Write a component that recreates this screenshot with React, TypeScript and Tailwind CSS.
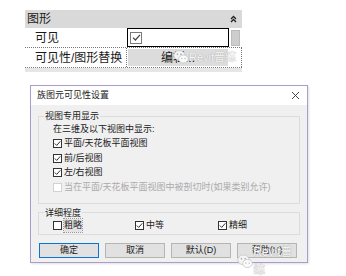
import React from 'react';

const FONT = "font-['Liberation_Sans','Noto_Sans_CJK_SC',sans-serif]";

function CheckBox({ checked, disabled }: { checked?: boolean; disabled?: boolean }) {
  return (
    <span
      className={`w-[9px] h-[9px] border bg-white flex items-center justify-center shrink-0 ${
        disabled ? 'border-[#d2d2d2]' : 'border-[#333]'
      }`}
    >
      {checked && (
        <svg width="7" height="7" viewBox="0 0 7 7">
          <path d="M0.8 3.5 L2.7 5.4 L6.3 1.3" fill="none" stroke="#333" strokeWidth="1" />
        </svg>
      )}
    </span>
  );
}

function Option({ label, checked, disabled }: { label: string; checked?: boolean; disabled?: boolean }) {
  return (
    <div className={`flex items-center gap-[2px] h-[14.5px] ${disabled ? 'text-[#ababab]' : 'text-[#222]'}`}>
      <CheckBox checked={checked} disabled={disabled} />
      <span>{label}</span>
    </div>
  );
}

function WeChat({ size }: { size: number }) {
  return (
    <svg width={size} height={size} viewBox="0 0 20 20">
      <ellipse cx="8" cy="8" rx="7" ry="6" fill="#f4f4f4" stroke="#bdbdbd" strokeWidth="0.8" />
      <ellipse cx="13" cy="12.5" rx="6" ry="5" fill="#fafafa" stroke="#bdbdbd" strokeWidth="0.8" />
      <circle cx="5.5" cy="6.5" r="0.9" fill="#9a9a9a" />
      <circle cx="10" cy="6.5" r="0.9" fill="#9a9a9a" />
      <circle cx="11" cy="12" r="0.7" fill="#9a9a9a" />
      <circle cx="15" cy="12" r="0.7" fill="#9a9a9a" />
    </svg>
  );
}

function Button({ label, focused }: { label: string; focused?: boolean }) {
  return (
    <div
      className={`w-[60px] h-[15px] flex items-center justify-center bg-[#e1e1e1] border text-[9px] text-[#222] ${
        focused ? 'border-[#0a74d4]' : 'border-[#b5b5b5]'
      }`}
    >
      {label}
    </div>
  );
}

export default function App() {
  return (
    <div className={`w-[346px] h-[276px] bg-white overflow-hidden flex flex-col pt-[10px] ${FONT}`}>
      {/* Properties panel */}
      <div className="ml-[25px] w-[217px] text-[12px] text-[#1a1a1a]">
        <div className="h-[18px] bg-[#d9d9d9] flex items-center justify-between pl-[2px] pr-[5px]">
          <span>图形</span>
          <svg width="7" height="8" viewBox="0 0 7 8">
            <path d="M1 4 L3.5 1.5 L6 4 M1 7 L3.5 4.5 L6 7" fill="none" stroke="#222" strokeWidth="1.3" />
          </svg>
        </div>
        <div className="h-[20px] flex bg-white border-b border-dotted border-[#777]">
          <div className="w-[102px] pl-[10px] flex items-center">可见</div>
          <div className="w-[102px] h-[19px] border border-black flex items-center pl-[2px]">
            <span className="w-[12px] h-[12px] border border-[#7a7a7a] flex items-center justify-center">
              <svg width="9" height="9" viewBox="0 0 9 9">
                <path d="M1 4.6 L3.4 7 L8 1.8" fill="none" stroke="#444" strokeWidth="1.2" />
              </svg>
            </span>
          </div>
          <div className="ml-[2px] mt-[2px] w-[9px] h-[16px] bg-[#cdcdcd] border border-[#bbb]" />
        </div>
        <div className="h-[20px] flex bg-white border-b border-dotted border-[#777]">
          <div className="w-[102px] pl-[10px] flex items-center border-r border-dotted border-[#777]">可见性/图形替换</div>
          <div className="relative flex-1 flex items-center pr-[1px] border-r border-dotted border-[#777]">
            <div className="ml-[1px] w-[100px] h-[17px] bg-[#dcdcdc] flex items-center pl-[33px]">编辑...</div>
            <div className="absolute left-[46px] top-[1px] flex items-center">
              <WeChat size={16} />
              <span className="text-[11px] text-[#f7f7f7] [text-shadow:0_0_1px_#888]">Revit普综</span>
            </div>
          </div>
        </div>
        <div className="h-[4px] bg-[#e6e6e6]" />
      </div>

      {/* Dialog */}
      <div className="ml-[30px] mt-[13px] w-[278px] h-[178px] border border-[#ab9ccb] bg-[#f0f0f0] flex flex-col text-[9px] text-[#222] shadow-[1px_1px_2px_rgba(0,0,0,0.12)]">
        <div className="h-[19px] bg-white flex items-center justify-between pl-[6px] pr-[7px]">
          <span>族图元可见性设置</span>
          <svg width="9" height="9" viewBox="0 0 9 9">
            <path d="M1 1 L8 8 M8 1 L1 8" stroke="#333" strokeWidth="0.9" />
          </svg>
        </div>

        <div className="flex-1 px-[7px] pt-[5px] flex flex-col">
          <fieldset className="border border-[#dcdcdc] pl-[5px] pb-[8px]">
            <legend className="px-[1px] leading-[12px]">视图专用显示</legend>
            <div className="pl-[9px]">
              <div className="h-[14.5px] flex items-center">在三维及以下视图中显示:</div>
              <Option label="平面/天花板平面视图" checked />
              <Option label="前/后视图" checked />
              <Option label="左/右视图" checked />
              <Option label="当在平面/天花板平面视图中被剖切时(如果类别允许)" disabled />
            </div>
          </fieldset>

          <fieldset className="mt-[3px] border border-[#dcdcdc] pl-[5px] pb-[1px]">
            <legend className="px-[1px] leading-[12px]">详细程度</legend>
            <div className="pl-[9px] flex">
              <div className="w-[82px] flex items-center gap-[2px] h-[14px]">
                <CheckBox />
                <span className="bg-[#e4e4e4] outline-1 outline-dotted outline-[#999]">粗略</span>
              </div>
              <div className="w-[83px]">
                <Option label="中等" checked />
              </div>
              <Option label="精细" checked />
            </div>
          </fieldset>

          <div className="mt-[8px] pl-[1px] flex gap-[6px]">
            <Button label="确定" focused />
            <Button label="取消" />
            <Button label="默认(D)" />
            <div className="relative">
              <Button label="帮助(H)" />
              <div className="absolute left-[0px] top-[0px] flex items-center">
                <WeChat size={19} />
                <span className="text-[12px] text-[#fafafa] [text-shadow:0_0_1px_#777]">Revit普综</span>
              </div>
            </div>
          </div>
        </div>
      </div>
    </div>
  );
}
